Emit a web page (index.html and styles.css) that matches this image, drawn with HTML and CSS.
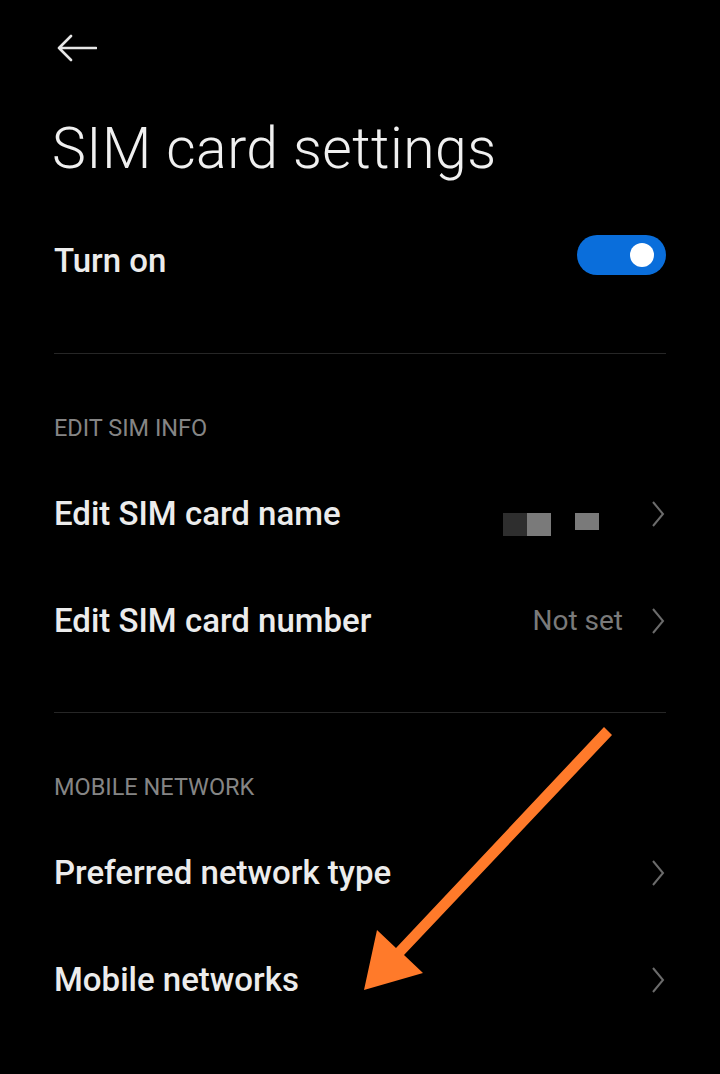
FILE: index.html
```html
<!DOCTYPE html>
<html lang="en">

<head>
    <meta charset="UTF-8">
    <meta name="viewport" content="width=device-width, initial-scale=1.0">
    <title>SIM card settings</title>
    <link rel="stylesheet" href="styles.css">
</head>

<body>

    <div class="screen">
        <div class="topbar">
            <button class="back" aria-label="Back">
                <svg width="40" height="28" viewBox="0 0 40 28">
                    <path d="M2 14 H39 M14 2 L2 14 L14 26" fill="none" stroke="#e6e6e6" stroke-width="2.6"
                        stroke-linecap="round" stroke-linejoin="round" />
                </svg>
            </button>
        </div>

        <h1 class="title">SIM card settings</h1>

        <div class="switch-row">
            <span class="label">Turn on</span>
            <span class="switch"><span class="knob"></span></span>
        </div>

        <div class="divider first"></div>

        <section class="group">
            <h2 class="group-title">EDIT SIM INFO</h2>
            <div class="item">
                <span class="label">Edit SIM card name</span>
                <span class="value hidden-value">
                    <span class="blur dark"></span><span class="blur"></span>
                    <span class="blur short"></span>
                </span>
                <svg class="chevron" width="14" height="26" viewBox="0 0 14 26">
                    <path d="M2 1 L12 13 L2 25" fill="none" stroke="#6b6b6b" stroke-width="2" />
                </svg>
            </div>
            <div class="item">
                <span class="label">Edit SIM card number</span>
                <span class="value">Not set</span>
                <svg class="chevron" width="14" height="26" viewBox="0 0 14 26">
                    <path d="M2 1 L12 13 L2 25" fill="none" stroke="#6b6b6b" stroke-width="2" />
                </svg>
            </div>
        </section>

        <div class="divider"></div>

        <section class="group">
            <h2 class="group-title">MOBILE NETWORK</h2>
            <div class="item">
                <span class="label">Preferred network type</span>
                <svg class="chevron" width="14" height="26" viewBox="0 0 14 26">
                    <path d="M2 1 L12 13 L2 25" fill="none" stroke="#6b6b6b" stroke-width="2" />
                </svg>
            </div>
            <div class="item">
                <span class="label">Mobile networks</span>
                <svg class="chevron" width="14" height="26" viewBox="0 0 14 26">
                    <path d="M2 1 L12 13 L2 25" fill="none" stroke="#6b6b6b" stroke-width="2" />
                </svg>
            </div>
        </section>

        <!-- orange pointer drawn over the screenshot -->
        <svg class="pointer" width="720" height="1074" viewBox="0 0 720 1074">
            <polygon fill="#ff7a2a"
                points="604,727 612,735 404,955 423,973 364,990 377,930 396,948" />
        </svg>
    </div>

</body>

</html>
```

FILE: styles.css
```css
body {
    margin: 0;
    background-color: #000;
    font-family: Roboto, "Noto Sans", sans-serif;
    color: #ececec;
}

.screen {
    position: relative;
    width: 720px;
    height: 1074px;
    overflow: hidden;
    padding: 0 54px;
    box-sizing: border-box;
}

.topbar {
    height: 96px;
    display: flex;
    align-items: center;
}

.back {
    background: none;
    border: 0;
    padding: 0;
    margin-left: 3px;
    display: flex;
}

.title {
    margin: 0;
    padding-top: 17px;
    font-size: 57px;
    font-weight: 300;
    letter-spacing: 0.5px;
    line-height: 72px;
    color: #f0f0f0;
    margin-left: -2px;
}

.label {
    font-size: 33px;
    font-weight: 500;
    color: #ececec;
    flex: 1;
}

.switch-row {
    display: flex;
    align-items: center;
    margin-top: 50px;
    height: 40px;
}

.switch-row .label {
    margin-top: 10px;
}

.switch {
    width: 89px;
    height: 40px;
    border-radius: 20px;
    background-color: #0a6edb;
    display: flex;
    align-items: center;
    justify-content: flex-end;
    padding-right: 12px;
    box-sizing: border-box;
}

.knob {
    width: 24px;
    height: 24px;
    border-radius: 50%;
    background-color: #fff;
}

.divider {
    height: 1px;
    background-color: #262626;
    margin-top: 38px;
}

.divider.first {
    margin-top: 78px;
}

.group-title {
    margin: 0;
    padding-top: 62px;
    margin-bottom: 20px;
    font-size: 23.5px;
    font-weight: 400;
    line-height: 24px;
    color: #858585;
}

.item {
    height: 107px;
    display: flex;
    align-items: center;
}

.value {
    font-size: 28px;
    color: #7a7a7a;
    margin-right: 28px;
}

.hidden-value {
    display: flex;
    align-items: flex-start;
    height: 23px;
    margin-top: 21px;
    margin-right: 52px;
}

.blur {
    width: 24px;
    height: 23px;
    background-color: #7a7a7a;
}

.blur.dark {
    background-color: #2e2e2e;
}

.blur.short {
    height: 17px;
    margin-left: 24px;
}

.chevron {
    flex: none;
    margin-right: 1px;
}

.pointer {
    position: absolute;
    left: 0;
    top: 0;
    pointer-events: none;
}
```
